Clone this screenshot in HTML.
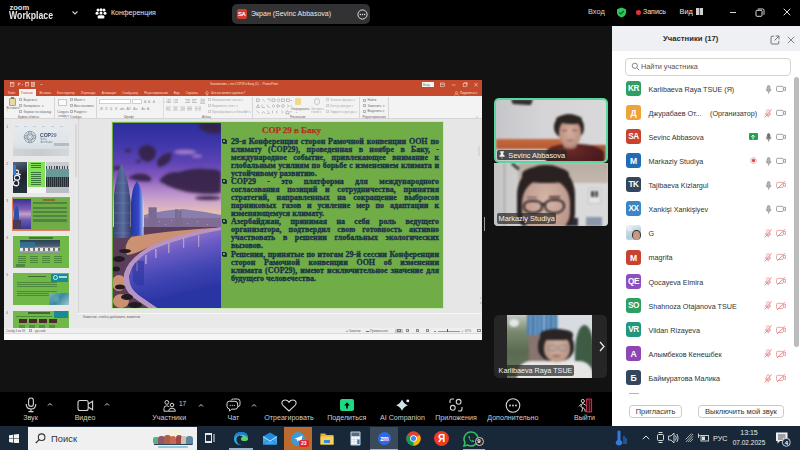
<!DOCTYPE html>
<html><head><meta charset="utf-8">
<style>
*{margin:0;padding:0;box-sizing:border-box}
html,body{width:800px;height:450px;overflow:hidden;background:#121212;font-family:"Liberation Sans",sans-serif}
.a{position:absolute}
#top{left:0;top:0;width:800px;height:26px;background:#000}
#main{left:0;top:26px;width:612px;height:366px;background:#121212}
#tool{left:0;top:392px;width:612px;height:35px;background:#000}
#panel{left:612px;top:26px;width:188px;height:401px;background:#fff}
#phead{left:0;top:0;width:188px;height:25px;background:#eef0f4}
#task{left:0;top:426px;width:800px;height:24px;background:#182838}
/* ppt */
#ppt{left:4px;top:80px;width:478px;height:260px;background:#e6e6e6;overflow:hidden}
#ttl{left:0;top:0;width:478px;height:16px;background:#c5492c}
#rib{left:0;top:16px;width:478px;height:23px;background:#f3f3f3;border-bottom:1px solid #d6d6d6}
#thumbs{left:0;top:39px;width:74px;height:210px;background:#e8e8e8}
#slide{left:107px;top:41px;width:333px;height:188px;background:#70ad47;border:1px solid #c8ecb0}
#notes{left:74px;top:232.5px;width:404px;height:15.5px;background:#e9e9e9;border-top:1px solid #f6f6f6}
#status{left:0;top:248px;width:478px;height:6px;background:#efefef;border-bottom:0.5px solid #dadada}
#sbot{left:0;top:254px;width:478px;height:6px;background:#f6f6f6}
.tile{background:#222}
</style></head><body>
<svg width="0" height="0" style="position:absolute"><defs>
<linearGradient id="sky" x1="0" y1="0" x2="0" y2="185" gradientUnits="userSpaceOnUse">
 <stop offset="0" stop-color="#2c2e9c"/>
 <stop offset="0.108" stop-color="#3e36aa"/>
 <stop offset="0.216" stop-color="#5e44b4"/>
 <stop offset="0.297" stop-color="#8a5cc0"/>
 <stop offset="0.357" stop-color="#b084c8"/>
 <stop offset="0.41" stop-color="#c8a0cc"/>
 <stop offset="0.449" stop-color="#d8b0c4"/>
 <stop offset="0.486" stop-color="#e6c0b2"/>
</linearGradient>
<linearGradient id="water" x1="0" y1="105" x2="20" y2="185" gradientUnits="userSpaceOnUse">
 <stop offset="0" stop-color="#cca0d2"/>
 <stop offset="0.22" stop-color="#a080cc"/>
 <stop offset="0.45" stop-color="#6c5cc4"/>
 <stop offset="0.72" stop-color="#4246b4"/>
 <stop offset="1" stop-color="#2a34a4"/>
</linearGradient>
<linearGradient id="tw1" x1="0" y1="0" x2="1" y2="0">
 <stop offset="0" stop-color="#3a4676"/>
 <stop offset="0.55" stop-color="#5a6e9e"/>
 <stop offset="1" stop-color="#34406e"/>
</linearGradient>
<linearGradient id="tw2" x1="0" y1="0" x2="1" y2="0">
 <stop offset="0" stop-color="#2434a0"/>
 <stop offset="0.6" stop-color="#3448c8"/>
 <stop offset="0.85" stop-color="#7a90e0"/>
 <stop offset="1" stop-color="#c8d4f4"/>
</linearGradient>
<filter id="bl" x="-5%" y="-5%" width="110%" height="110%"><feGaussianBlur stdDeviation="0.45"/></filter><filter id="bl3" x="-20%" y="-20%" width="140%" height="140%"><feGaussianBlur stdDeviation="1.6"/></filter>
<g id="city">
 <rect x="0" y="0" width="108" height="185" fill="url(#sky)"/>
 <g filter="url(#bl)">
 <g fill="#36224a" opacity="0.95" filter="url(#bl3)">
  <path d="M86 0 H108 V10 Q98 12 90 8 Q84 4 86 0 Z"/>
  <path d="M25 28 Q28 21 36 22 Q44 24 43 32 Q40 39 33 39 Q26 36 25 28 Z"/>
  <path d="M44 38 Q50 29 58 30 Q60 35 55 40 Q50 44 45 44 Z"/>
  <ellipse cx="15" cy="27.5" rx="3.5" ry="1.6"/>
  <ellipse cx="25.5" cy="38.5" rx="2.5" ry="1.4"/>
  <path d="M46 58 Q52 48 66 49 Q80 44 96 46 Q108 46 108 50 V70 Q96 72 82 70 Q62 68 46 58 Z"/>
  <path d="M15 55 Q22 49 32 51 Q40 54 38 58 Q28 60 15 55 Z"/>
  <ellipse cx="95" cy="75" rx="13" ry="2"/>
  <ellipse cx="4" cy="45" rx="4" ry="2"/>
 </g>
 <g fill="#c494d0" opacity="0.7" filter="url(#bl3)">
  <ellipse cx="72" cy="29" rx="11" ry="2.6"/>
  <ellipse cx="84" cy="33" rx="5" ry="1.6"/>
 </g>
 <path d="M31 92 Q50 87 70 86 Q88 88 108 92 V114 H31 Z" fill="#8a7eae"/>
 <g fill="#7a6a92">
  <rect x="35.5" y="84.3" width="8.2" height="28"/>
  <rect x="62" y="86.4" width="3" height="26"/>
  <rect x="65.5" y="87.5" width="3" height="25"/>
 </g>
 <path d="M31 95 H108 V112 H31 Z" fill="#7c6a90" opacity="0.85"/>
 <g fill="#e8c0a0" opacity="0.5">
  <rect x="46" y="98" width="1" height="1"/><rect x="52" y="101" width="1" height="1"/><rect x="58" y="97" width="1" height="1"/><rect x="74" y="100" width="1" height="1"/><rect x="84" y="98" width="1" height="1"/><rect x="94" y="101" width="1" height="1"/>
 </g>
 <path d="M0 104 H108 V105 Q62 112 36 124 Q16 136 12 150 Q10 166 20 174 Q30 181 36 185 H0 Z" fill="#5a3c58"/>
 <g fill="#e0a078" opacity="0.85">
  <path d="M18 114 Q50 108 100 105 L108 105 Q62 112 36 124 Q20 132 14 132 Q10 122 18 114 Z"/>
  <ellipse cx="6" cy="160" rx="7" ry="8"/>
  <ellipse cx="8" cy="178" rx="8" ry="7"/>
 </g>
 <path d="M108 107 Q64 115 38 127 Q19 138 16 152 Q15 165 25 172 Q35 179 44 185 H108 Z" fill="url(#water)"/>
 <g fill="#f4d4c4" opacity="0.5">
  <rect x="23" y="139" width="2" height="9"/>
  <rect x="32" y="132" width="1.8" height="9"/>
  <rect x="42" y="126" width="1.6" height="9"/>
  <rect x="55" y="120" width="1.4" height="10"/>
  <rect x="70" y="115" width="1.2" height="10"/>
  <rect x="85" y="112" width="1.2" height="12"/>
 </g>
 <path d="M19 143 Q24 136 31 138 V162 Q24 164 20 158 Z" fill="#26329a" opacity="0.55"/>
 <path d="M108 104 Q62 111 36 124 Q15 136 11 151 Q9 166 20 174 Q30 181 36 185 L44 185 Q35 179 25 172 Q15 165 16 152 Q19 138 38 127 Q64 115 108 107 Z" fill="#b894c4"/>
 <g fill="#241e24">
  <ellipse cx="6" cy="136" rx="6" ry="3"/>
  <ellipse cx="3" cy="146" rx="4" ry="2.5"/>
  <ellipse cx="7" cy="164" rx="5" ry="2.5"/>
  <ellipse cx="14" cy="174" rx="6" ry="3"/>
  <ellipse cx="22" cy="182" rx="7" ry="3"/>
  <ellipse cx="12" cy="128" rx="6" ry="2"/>
 </g>
 <path d="M1 115 V72 Q3 52 8.6 40 Q15 54 17.6 78 V115 Z" fill="url(#tw1)"/>
 <path d="M18 112 V80 Q19 64 24 58 Q30 66 30.6 82 V112 Z" fill="url(#tw2)"/>
 <g stroke="#9aaed8" stroke-width="0.45" opacity="0.45">
  <path d="M3 60 H14 M2 70 H16 M1 80 H17 M1 90 H17 M1 100 H17 M1 110 H17"/>
 </g>
 </g>
</g>
</defs></svg>

<div id="top" class="a">
  <div class="a" style="left:9.4px;top:3.2px;font-size:7.6px;font-weight:700;color:#e0e0e0;line-height:9px">zoom</div>
  <div class="a" style="left:9.4px;top:10px;font-size:10.4px;font-weight:700;color:#e6e6e6;line-height:12px;transform:scaleX(0.84);transform-origin:0 0">Workplace</div>
  <svg class="a" style="left:71px;top:10px" width="8" height="6" viewBox="0 0 8 6"><path d="M1.5 1.5 L4 4 L6.5 1.5" stroke="#cfcfcf" stroke-width="1.1" fill="none"/></svg>
  <svg class="a" style="left:95px;top:8px" width="12" height="11" viewBox="0 0 12 11"><g fill="#fff"><circle cx="3" cy="2" r="1.5"/><circle cx="6" cy="1.7" r="1.5"/><circle cx="9" cy="2" r="1.5"/><circle cx="2" cy="5.3" r="1.5"/><circle cx="6" cy="5" r="1.5"/><circle cx="10" cy="5.3" r="1.5"/><rect x="2.5" y="7.2" width="7" height="3.4" rx="1.6"/></g></svg>
  <div class="a" style="left:111px;top:8px;font-size:7px;color:#e6e6e6;line-height:10px">Конференция</div>
  <div class="a" style="left:232px;top:4px;width:138px;height:19.5px;background:#323234;border-radius:5px"></div>
  <div class="a" style="left:236.5px;top:9px;width:10.5px;height:10px;background:#d53b2c;border-radius:2px;color:#fff;font-size:6px;font-weight:700;text-align:center;line-height:10px;letter-spacing:-0.3px">SA</div>
  <div class="a" style="left:251px;top:9px;font-size:7px;color:#e8e8e8;line-height:10px">Экран (Sevinc Abbasova)</div>
  <svg class="a" style="left:356.5px;top:8.5px" width="11" height="11" viewBox="0 0 11 11"><circle cx="5.5" cy="5.5" r="4.6" stroke="#e0e0e0" stroke-width="1" fill="none"/><g fill="#e0e0e0"><circle cx="3.4" cy="5.5" r="0.7"/><circle cx="5.5" cy="5.5" r="0.7"/><circle cx="7.6" cy="5.5" r="0.7"/></g></svg>
  <div class="a" style="left:588px;top:7px;font-size:7.4px;color:#d8d8d8;line-height:10px">Вход</div>
  <svg class="a" style="left:615.5px;top:7px" width="11" height="11" viewBox="0 0 11 11"><path d="M5.5 0.6 L10 2.2 L10 5.2 C10 8 7.8 9.8 5.5 10.6 C3.2 9.8 1 8 1 5.2 L1 2.2 Z" fill="#2ec55a"/><path d="M3.3 5.5 L4.9 7 L7.8 4" stroke="#062" stroke-width="1.2" fill="none"/></svg>
  <div class="a" style="left:636px;top:10.3px;width:4.6px;height:4.6px;border-radius:50%;background:#e0303a"></div>
  <div class="a" style="left:643px;top:7px;font-size:7px;color:#e8e8e8;line-height:10px">Запись</div>
  <div class="a" style="left:679.5px;top:7px;font-size:7.4px;color:#e8e8e8;line-height:10px">Вид</div>
  <div class="a" style="left:696px;top:8.3px;width:7px;height:6.8px;background:#d0d0d0"></div>
  <div class="a" style="left:699.2px;top:8.3px;width:0.8px;height:6.8px;background:#555"></div>
  <div class="a" style="left:729.5px;top:11.5px;width:6.5px;height:1px;background:#d8d8d8"></div>
  <svg class="a" style="left:755px;top:8px" width="10" height="9" viewBox="0 0 10 9"><rect x="1" y="2.3" width="6" height="6" rx="1" stroke="#d8d8d8" stroke-width="1" fill="none"/><path d="M2.7 1 H7.8 Q9 1 9 2.2 V6.8" stroke="#d8d8d8" stroke-width="1" fill="none"/></svg>
  <svg class="a" style="left:783px;top:8px" width="8" height="8" viewBox="0 0 8 8"><path d="M0.7 0.7 L7.3 7.3 M7.3 0.7 L0.7 7.3" stroke="#e0e0e0" stroke-width="1"/></svg>
</div>
<div id="main" class="a"></div>
<div id="tool" class="a"></div>
<div class="a" style="left:-9.5px;top:413.5px;width:80px;text-align:center;font-size:7.1px;color:#cfcfcf;line-height:9px;white-space:nowrap">Звук</div>
<div class="a" style="left:45px;top:413.5px;width:80px;text-align:center;font-size:7.1px;color:#cfcfcf;line-height:9px;white-space:nowrap">Видео</div>
<div class="a" style="left:129.2px;top:413.5px;width:80px;text-align:center;font-size:7.1px;color:#cfcfcf;line-height:9px;white-space:nowrap">Участники</div>
<div class="a" style="left:193.4px;top:413.5px;width:80px;text-align:center;font-size:7.1px;color:#cfcfcf;line-height:9px;white-space:nowrap">Чат</div>
<div class="a" style="left:249px;top:413.5px;width:80px;text-align:center;font-size:7.1px;color:#cfcfcf;line-height:9px;white-space:nowrap">Отреагировать</div>
<div class="a" style="left:306.8px;top:413.5px;width:80px;text-align:center;font-size:7.1px;color:#cfcfcf;line-height:9px;white-space:nowrap">Поделиться</div>
<div class="a" style="left:362.5px;top:413.5px;width:80px;text-align:center;font-size:7.1px;color:#cfcfcf;line-height:9px;white-space:nowrap">AI Companion</div>
<div class="a" style="left:416px;top:413.5px;width:80px;text-align:center;font-size:7.1px;color:#cfcfcf;line-height:9px;white-space:nowrap">Приложения</div>
<div class="a" style="left:472.79999999999995px;top:413.5px;width:80px;text-align:center;font-size:7.1px;color:#cfcfcf;line-height:9px;white-space:nowrap">Дополнительно</div>
<div class="a" style="left:544.5px;top:413.5px;width:80px;text-align:center;font-size:7.1px;color:#cfcfcf;line-height:9px;white-space:nowrap">Выйти</div>
<svg class="a" style="left:25px;top:397px" width="12" height="16" viewBox="0 0 12 16"><rect x="3.6" y="1" width="4.8" height="8.4" rx="2.4" fill="none" stroke="#d6d6d6" stroke-width="1.1"/><path d="M1.2 7 Q1.2 12 6 12 Q10.8 12 10.8 7 M6 12 V14.6 M3.5 14.6 H8.5" fill="none" stroke="#d6d6d6" stroke-width="1.1"/></svg>
<svg class="a" style="left:47px;top:402px" width="6" height="5" viewBox="0 0 6 5"><path d="M1 3.5 L3 1.5 L5 3.5" fill="none" stroke="#d6d6d6" stroke-width="1"/></svg>
<svg class="a" style="left:77px;top:399px" width="17" height="13" viewBox="0 0 17 13"><rect x="1" y="1.5" width="10.2" height="10" rx="2" fill="none" stroke="#d6d6d6" stroke-width="1.1"/><path d="M11.2 5 L15.6 2.2 V10.8 L11.2 8" fill="none" stroke="#d6d6d6" stroke-width="1.1"/></svg>
<svg class="a" style="left:104px;top:402px" width="6" height="5" viewBox="0 0 6 5"><path d="M1 3.5 L3 1.5 L5 3.5" fill="none" stroke="#d6d6d6" stroke-width="1"/></svg>
<svg class="a" style="left:162.5px;top:399.5px" width="13" height="12" viewBox="0 0 13 12"><circle cx="3.8" cy="2.4" r="1.9" fill="none" stroke="#d6d6d6" stroke-width="1"/><path d="M1 11.2 V8.4 Q1 5.8 3.8 5.8 Q5.6 5.8 6.3 7.2" fill="none" stroke="#d6d6d6" stroke-width="1"/><circle cx="9" cy="5" r="1.8" fill="none" stroke="#d6d6d6" stroke-width="1"/><path d="M5.6 11.2 Q5.6 8.2 9 8.2 Q12.4 8.2 12.4 11.2 Z M1 11.2 H5.6" fill="none" stroke="#d6d6d6" stroke-width="1"/></svg>
<div class="a" style="left:179px;top:399.5px;font-size:6.5px;color:#d0d0d0;line-height:8px">17</div>
<svg class="a" style="left:197.5px;top:402.5px" width="6" height="5" viewBox="0 0 6 5"><path d="M1 3.5 L3 1.5 L5 3.5" fill="none" stroke="#d6d6d6" stroke-width="1"/></svg>
<svg class="a" style="left:226px;top:398px" width="15" height="14" viewBox="0 0 15 14"><path d="M5 2.5 Q5.5 1 7.5 1 H11.5 Q14 1 14 3.5 V6.5 Q14 8.5 12 8.8" fill="none" stroke="#d6d6d6" stroke-width="1"/><path d="M3.3 3.3 H9 Q11.7 3.3 11.7 6 V8.6 Q11.7 11.2 9 11.2 H5.5 L3.5 13.2 V11 Q1 10.6 1 8.4 V5.7 Q1 3.3 3.3 3.3 Z" fill="none" stroke="#d6d6d6" stroke-width="1"/><g fill="#d6d6d6"><circle cx="4.3" cy="7.3" r="0.6"/><circle cx="6.3" cy="7.3" r="0.6"/><circle cx="8.3" cy="7.3" r="0.6"/></g></svg>
<svg class="a" style="left:250.5px;top:402.5px" width="6" height="5" viewBox="0 0 6 5"><path d="M1 3.5 L3 1.5 L5 3.5" fill="none" stroke="#d6d6d6" stroke-width="1"/></svg>
<svg class="a" style="left:281px;top:399px" width="16" height="13" viewBox="0 0 16 13"><path d="M8 12 L2.2 6.6 Q0.6 5 1 3.2 Q1.6 1 4.2 1 Q6.6 1 8 3.2 Q9.4 1 11.8 1 Q14.4 1 15 3.2 Q15.4 5 13.8 6.6 Z" fill="none" stroke="#d6d6d6" stroke-width="1.1"/></svg>
<div class="a" style="left:339.7px;top:398.8px;width:14px;height:12px;background:#1fd882;border-radius:2px"></div>
<svg class="a" style="left:342.5px;top:400.5px" width="8" height="8" viewBox="0 0 8 8"><path d="M4 7.5 V2.5" stroke="#000" stroke-width="1.6"/><path d="M1.2 4.4 L4 1.2 L6.8 4.4 Z" fill="#000"/></svg>
<svg class="a" style="left:395.5px;top:398.5px" width="14" height="13" viewBox="0 0 14 13"><path d="M6 0.6 Q7.6 4.6 11.8 6.2 Q7.6 7.8 6 11.8 Q4.4 7.8 0.2 6.2 Q4.4 4.6 6 0.6 Z" fill="#cde4ec"/><circle cx="11.8" cy="1.9" r="1.4" fill="#e8f2f4"/></svg>
<svg class="a" style="left:448.5px;top:398px" width="14" height="14" viewBox="0 0 14 14"><circle cx="9.6" cy="3.8" r="2.4" fill="none" stroke="#d6d6d6" stroke-width="1.1"/><circle cx="3.8" cy="9.8" r="2.4" fill="none" stroke="#d6d6d6" stroke-width="1.1"/><path d="M1 5 V3 Q1 1 3 1 H5 M9 13 H11 Q13 13 13 11 V9" fill="none" stroke="#d6d6d6" stroke-width="1.1"/></svg>
<svg class="a" style="left:504.5px;top:397.8px" width="16" height="15" viewBox="0 0 16 15"><circle cx="8" cy="7.5" r="6.8" fill="none" stroke="#d6d6d6" stroke-width="1.1"/><g fill="#d6d6d6"><circle cx="5" cy="7.5" r="0.9"/><circle cx="8" cy="7.5" r="0.9"/><circle cx="11" cy="7.5" r="0.9"/></g></svg>
<svg class="a" style="left:577px;top:397.5px" width="16" height="15" viewBox="0 0 16 15"><path d="M9.6 1 H14.6 V14 H9.6 Z" fill="#3a0812" stroke="#e23a55" stroke-width="0.9"/><path d="M9.6 1 L12.6 2.6 V14.5" fill="none" stroke="#c02040" stroke-width="0.8"/><circle cx="5.8" cy="3" r="1.6" fill="none" stroke="#e6e6e6" stroke-width="0.9"/><path d="M5.6 5 L3.8 8.6 L5.8 9.6 L4.8 13.8 M5.8 9.6 L7.6 11 L8.4 13.8 M4.2 6 L2 8.4 M6.2 5.6 L8.8 7.4" fill="none" stroke="#e6e6e6" stroke-width="0.9"/></svg>

<div id="panel" class="a">
  <div id="phead" class="a"></div>
  <div class="a" style="left:51px;top:8px;font-size:7.7px;font-weight:700;color:#2b2b2b;line-height:10px">Участники (17)</div>
  <svg class="a" style="left:158px;top:8.5px" width="10" height="10" viewBox="0 0 10 10"><path d="M4 1.2 H2 Q1 1.2 1 2.2 V8 Q1 9 2 9 H7.8 Q8.8 9 8.8 8 V6" fill="none" stroke="#666" stroke-width="0.9"/><path d="M5.6 1 H9 V4.4 M9 1 L4.6 5.4" fill="none" stroke="#666" stroke-width="0.9"/></svg>
  <svg class="a" style="left:174.5px;top:9.5px" width="8" height="8" viewBox="0 0 8 8"><path d="M0.8 0.8 L7.2 7.2 M7.2 0.8 L0.8 7.2" stroke="#777" stroke-width="0.9"/></svg>
  <div class="a" style="left:12.5px;top:31.5px;width:166px;height:18px;border:1px solid #d4d4d4;border-radius:4px;background:#fff"></div>
  <svg class="a" style="left:18.5px;top:36px" width="9" height="9" viewBox="0 0 9 9"><circle cx="3.8" cy="3.8" r="2.6" fill="none" stroke="#777" stroke-width="0.9"/><path d="M6 6 L8.3 8.3" stroke="#777" stroke-width="0.9"/></svg>
  <div class="a" style="left:29px;top:35.5px;font-size:7.3px;color:#555;line-height:10px">Найти участника</div>
  <div class="a" style="left:182px;top:51px;width:5px;height:270px;border-radius:2.5px;background:#bcbcbc"></div>
<svg width="0" height="0" style="position:absolute"><defs>
<g id="mic"><rect x="2.3" y="0.6" width="2.6" height="5.2" rx="1.3" fill="#b4b4b4" stroke="#8c8c8c" stroke-width="0.7"/><path d="M1.2 3.8 Q1.2 6.7 3.6 6.7 Q6 6.7 6 3.8 M3.6 6.7 V8.7" fill="none" stroke="#8c8c8c" stroke-width="0.8"/></g>
<g id="mic2"><rect x="2.3" y="0.6" width="2.6" height="5.2" rx="1.3" fill="#707070" stroke="#6a6a6a" stroke-width="0.7"/><path d="M1.2 3.8 Q1.2 6.7 3.6 6.7 Q6 6.7 6 3.8 M3.6 6.7 V8.7" fill="none" stroke="#7a7a7a" stroke-width="0.8"/></g>
<g id="micx"><rect x="2.8" y="0.8" width="2.6" height="5.2" rx="1.3" fill="none" stroke="#e88a8a" stroke-width="0.75"/><path d="M1.6 4 Q1.6 6.9 4.1 6.9 Q6.6 6.9 6.6 4 M4.1 6.9 V8.7" fill="none" stroke="#e88a8a" stroke-width="0.75"/><path d="M0.6 8.6 L7.6 0.4" stroke="#e47878" stroke-width="0.85"/></g>
<g id="cam"><rect x="0.5" y="1.3" width="6.8" height="5.2" rx="1.1" fill="none" stroke="#8c8c8c" stroke-width="0.8"/><path d="M7.3 3.2 L9.5 2.1 V5.7 L7.3 4.6" fill="none" stroke="#8c8c8c" stroke-width="0.8"/></g>
<g id="camx"><rect x="0.5" y="1.3" width="6.8" height="5.2" rx="1.1" fill="none" stroke="#e88a8a" stroke-width="0.75"/><path d="M7.3 3.2 L9.5 2.1 V5.7 L7.3 4.6" fill="none" stroke="#e88a8a" stroke-width="0.75"/><path d="M1.2 7.8 L9 0.3" stroke="#e47878" stroke-width="0.85"/></g>
</defs></svg>
<div class="a" style="left:14px;top:55.00px;width:15px;height:15px;border-radius:3px;background:#2e9e63;color:#fff;font-size:8.2px;font-weight:700;text-align:center;line-height:16.8px;letter-spacing:-0.5px">KR</div>
<div class="a" style="left:36.5px;top:58.90px;font-size:7.2px;color:#333;line-height:9px;white-space:nowrap">Karlibaeva Raya TSUE (Я)</div>
<svg class="a" style="left:152.5px;top:58.60px" width="8" height="9" viewBox="0 0 8 9"><use href="#mic"/></svg>
<svg class="a" style="left:164px;top:58.80px" width="10" height="8" viewBox="0 0 10 8"><use href="#cam"/></svg>
<div class="a" style="left:14px;top:79.08px;width:15px;height:15px;border-radius:3px;background:#f0a23a;color:#fff;font-size:8.6px;font-weight:700;text-align:center;line-height:16.8px;letter-spacing:-0.3px">Д</div>
<div class="a" style="left:36.5px;top:82.98px;font-size:7.2px;color:#333;line-height:9px;white-space:nowrap">Джурабаев От...</div><div class="a" style="left:98px;top:82.98px;font-size:7.2px;color:#333;line-height:9px;white-space:nowrap">(Организатор)</div>
<svg class="a" style="left:151.5px;top:82.68px" width="8" height="9" viewBox="0 0 8 9"><use href="#micx"/></svg>
<svg class="a" style="left:164px;top:82.88px" width="10" height="8" viewBox="0 0 10 8"><use href="#cam"/></svg>
<div class="a" style="left:14px;top:103.16px;width:15px;height:15px;border-radius:3px;background:#c8432f;color:#fff;font-size:8.2px;font-weight:700;text-align:center;line-height:16.8px;letter-spacing:-0.5px">SA</div>
<div class="a" style="left:36.5px;top:107.06px;font-size:7.2px;color:#333;line-height:9px;white-space:nowrap">Sevinc Abbasova</div>
<svg class="a" style="left:152.5px;top:106.76px" width="8" height="9" viewBox="0 0 8 9"><use href="#mic2"/></svg>
<svg class="a" style="left:164px;top:106.96px" width="10" height="8" viewBox="0 0 10 8"><use href="#cam"/></svg>
<div class="a" style="left:136.5px;top:107.16px;width:9px;height:7px;background:#1ea34a;border-radius:1px"></div><svg class="a" style="left:138px;top:107.66px" width="6" height="6" viewBox="0 0 6 6"><path d="M3 5.5 V1.2 M1.3 2.8 L3 1 L4.7 2.8" stroke="#fff" stroke-width="0.9" fill="none"/></svg>
<div class="a" style="left:14px;top:127.24px;width:15px;height:15px;border-radius:3px;background:#1f6bb8;color:#fff;font-size:8.6px;font-weight:700;text-align:center;line-height:16.8px;letter-spacing:-0.3px">M</div>
<div class="a" style="left:36.5px;top:131.14px;font-size:7.2px;color:#333;line-height:9px;white-space:nowrap">Markaziy Studiya</div>
<svg class="a" style="left:152.5px;top:130.84px" width="8" height="9" viewBox="0 0 8 9"><use href="#mic"/></svg>
<svg class="a" style="left:164px;top:131.04px" width="10" height="8" viewBox="0 0 10 8"><use href="#cam"/></svg>
<div class="a" style="left:137.5px;top:130.94px;width:7.5px;height:7.5px;border-radius:50%;background:#f5dede;border:0.6px solid #eac6c6"></div><div class="a" style="left:139.9px;top:133.34px;width:2.7px;height:2.7px;border-radius:50%;background:#d84848"></div>
<div class="a" style="left:14px;top:151.32px;width:15px;height:15px;border-radius:3px;background:#34465e;color:#fff;font-size:8.2px;font-weight:700;text-align:center;line-height:16.8px;letter-spacing:-0.5px">TK</div>
<div class="a" style="left:36.5px;top:155.22px;font-size:7.2px;color:#333;line-height:9px;white-space:nowrap">Tajibaeva Kizlargul</div>
<svg class="a" style="left:152.5px;top:154.92px" width="8" height="9" viewBox="0 0 8 9"><use href="#mic"/></svg>
<svg class="a" style="left:164px;top:155.12px" width="10" height="8" viewBox="0 0 10 8"><use href="#camx"/></svg>
<div class="a" style="left:14px;top:175.40px;width:15px;height:15px;border-radius:3px;background:#3b86c6;color:#fff;font-size:8.2px;font-weight:700;text-align:center;line-height:16.8px;letter-spacing:-0.5px">XX</div>
<div class="a" style="left:36.5px;top:179.30px;font-size:7.2px;color:#333;line-height:9px;white-space:nowrap">Xankişi Xankişiyev</div>
<svg class="a" style="left:152.5px;top:179.00px" width="8" height="9" viewBox="0 0 8 9"><use href="#mic"/></svg>
<svg class="a" style="left:164px;top:179.20px" width="10" height="8" viewBox="0 0 10 8"><use href="#cam"/></svg>
<div class="a" style="left:14px;top:199.48px;width:15px;height:15px;border-radius:3px;background:linear-gradient(160deg,#f0f4f6 0%,#c4dae4 40%,#b0ccd8 70%,#d8e4e8 100%);overflow:hidden"><div class="a" style="left:6px;top:4.2px;width:8.5px;height:10px;border-radius:50%;background:#3a2a24"></div><div class="a" style="left:7px;top:5.8px;width:6.5px;height:8.5px;border-radius:50%;background:#c49a84"></div><div class="a" style="left:1px;top:1px;width:5px;height:5px;border-radius:50%;background:#e8f0f4;opacity:.7"></div></div>
<div class="a" style="left:36.5px;top:203.38px;font-size:7.2px;color:#333;line-height:9px;white-space:nowrap">G</div>
<svg class="a" style="left:151.5px;top:203.08px" width="8" height="9" viewBox="0 0 8 9"><use href="#micx"/></svg>
<svg class="a" style="left:164px;top:203.28px" width="10" height="8" viewBox="0 0 10 8"><use href="#camx"/></svg>
<div class="a" style="left:14px;top:223.56px;width:15px;height:15px;border-radius:3px;background:#c8432f;color:#fff;font-size:8.6px;font-weight:700;text-align:center;line-height:16.8px;letter-spacing:-0.3px">M</div>
<div class="a" style="left:36.5px;top:227.46px;font-size:7.2px;color:#333;line-height:9px;white-space:nowrap">magrifa</div>
<svg class="a" style="left:151.5px;top:227.16px" width="8" height="9" viewBox="0 0 8 9"><use href="#micx"/></svg>
<svg class="a" style="left:164px;top:227.36px" width="10" height="8" viewBox="0 0 10 8"><use href="#camx"/></svg>
<div class="a" style="left:14px;top:247.64px;width:15px;height:15px;border-radius:3px;background:#8d4fc0;color:#fff;font-size:8.2px;font-weight:700;text-align:center;line-height:16.8px;letter-spacing:-0.5px">QE</div>
<div class="a" style="left:36.5px;top:251.54px;font-size:7.2px;color:#333;line-height:9px;white-space:nowrap">Qocayeva Elmira</div>
<svg class="a" style="left:151.5px;top:251.24px" width="8" height="9" viewBox="0 0 8 9"><use href="#micx"/></svg>
<svg class="a" style="left:164px;top:251.44px" width="10" height="8" viewBox="0 0 10 8"><use href="#camx"/></svg>
<div class="a" style="left:14px;top:271.72px;width:15px;height:15px;border-radius:3px;background:#2e9e63;color:#fff;font-size:8.2px;font-weight:700;text-align:center;line-height:16.8px;letter-spacing:-0.5px">SO</div>
<div class="a" style="left:36.5px;top:275.62px;font-size:7.2px;color:#333;line-height:9px;white-space:nowrap">Shahnoza Otajanova TSUE</div>
<svg class="a" style="left:151.5px;top:275.32px" width="8" height="9" viewBox="0 0 8 9"><use href="#micx"/></svg>
<svg class="a" style="left:164px;top:275.52px" width="10" height="8" viewBox="0 0 10 8"><use href="#camx"/></svg>
<div class="a" style="left:14px;top:295.80px;width:15px;height:15px;border-radius:3px;background:#23977d;color:#fff;font-size:8.2px;font-weight:700;text-align:center;line-height:16.8px;letter-spacing:-0.5px">VR</div>
<div class="a" style="left:36.5px;top:299.70px;font-size:7.2px;color:#333;line-height:9px;white-space:nowrap">Vildan Rizayeva</div>
<svg class="a" style="left:151.5px;top:299.40px" width="8" height="9" viewBox="0 0 8 9"><use href="#micx"/></svg>
<svg class="a" style="left:164px;top:299.60px" width="10" height="8" viewBox="0 0 10 8"><use href="#camx"/></svg>
<div class="a" style="left:14px;top:319.88px;width:15px;height:15px;border-radius:3px;background:#8d46b4;color:#fff;font-size:8.6px;font-weight:700;text-align:center;line-height:16.8px;letter-spacing:-0.3px">A</div>
<div class="a" style="left:36.5px;top:323.78px;font-size:7.2px;color:#333;line-height:9px;white-space:nowrap">Алымбеков Кенешбек</div>
<svg class="a" style="left:151.5px;top:323.48px" width="8" height="9" viewBox="0 0 8 9"><use href="#micx"/></svg>
<svg class="a" style="left:164px;top:323.68px" width="10" height="8" viewBox="0 0 10 8"><use href="#camx"/></svg>
<div class="a" style="left:14px;top:343.96px;width:15px;height:15px;border-radius:3px;background:#34465e;color:#fff;font-size:8.6px;font-weight:700;text-align:center;line-height:16.8px;letter-spacing:-0.3px">Б</div>
<div class="a" style="left:36.5px;top:347.86px;font-size:7.2px;color:#333;line-height:9px;white-space:nowrap">Баймуратова Малика</div>
<svg class="a" style="left:151.5px;top:347.56px" width="8" height="9" viewBox="0 0 8 9"><use href="#micx"/></svg>
<svg class="a" style="left:164px;top:347.76px" width="10" height="8" viewBox="0 0 10 8"><use href="#camx"/></svg>
  <div class="a" style="left:16.5px;top:367px;width:10.5px;height:1px;background:#e8a090"></div>
  <div class="a" style="left:0;top:368px;width:188px;height:33px;background:#fff"></div>
  <div class="a" style="left:17px;top:378.6px;width:53px;height:13px;border:1px solid #c9c9c9;border-radius:3.5px;font-size:7.4px;color:#333;text-align:center;line-height:11px">Пригласить</div>
  <div class="a" style="left:86px;top:378.6px;width:85.7px;height:13px;border:1px solid #c9c9c9;border-radius:3.5px;font-size:7.6px;color:#333;text-align:center;line-height:11px">Выключить мой звук</div>
</div>
<div id="task" class="a">
  <svg class="a" style="left:9.4px;top:7.6px" width="10" height="9.4" viewBox="0 0 10 9.4"><g fill="#f4f4f4"><path d="M0 1.3 L4.2 0.7 V4.4 H0 Z"/><path d="M4.9 0.6 L10 0 V4.4 H4.9 Z"/><path d="M0 5.1 H4.2 V8.7 L0 8.1 Z"/><path d="M4.9 5.1 H10 V9.4 L4.9 8.8 Z"/></g></svg>
  <div class="a" style="left:28px;top:0.5px;width:169px;height:23.5px;background:#f0f0f0"></div>
  <svg class="a" style="left:35px;top:7px" width="11" height="11" viewBox="0 0 11 11"><circle cx="6.6" cy="4.2" r="3.3" fill="none" stroke="#333" stroke-width="1.1"/><path d="M4.2 6.6 L0.8 10" stroke="#333" stroke-width="1.2"/></svg>
  <div class="a" style="left:51px;top:6.5px;font-size:9.4px;color:#333;line-height:11px">Поиск</div>
  <div class="a" style="left:152px;top:2.5px;width:42px;height:19.5px;overflow:hidden">
    <div class="a" style="left:12px;top:0;width:18px;height:6px;border-radius:50%;background:#f6efd0;opacity:.7"></div>
    <div class="a" style="left:1px;top:8px;width:6px;height:7px;background:#58b07a;border-radius:2px"></div>
    <div class="a" style="left:6px;top:7px;width:7px;height:9px;background:#8a5a6a;border-radius:3px 3px 0 0"></div>
    <div class="a" style="left:12px;top:6px;width:7px;height:10px;background:#b06048;border-radius:3px 3px 0 0"></div>
    <div class="a" style="left:18px;top:7px;width:6px;height:9px;background:#c46a50;border-radius:3px 3px 0 0"></div>
    <div class="a" style="left:24px;top:6px;width:6px;height:10px;background:#a04a40;border-radius:3px 3px 0 0"></div>
    <div class="a" style="left:29px;top:7px;width:6px;height:9px;background:#d0c0b8;border-radius:3px 3px 0 0"></div>
    <div class="a" style="left:34px;top:7px;width:7px;height:9px;background:#5a8aa0;border-radius:3px 3px 0 0"></div>
    <div class="a" style="left:2px;top:15px;width:38px;height:1.5px;background:#3a3a5a"></div>
    <div class="a" style="left:6px;top:17px;width:30px;height:2px;background:#88cfd8;border-radius:1px"></div>
  </div>
  <svg class="a" style="left:205px;top:7px" width="11" height="10" viewBox="0 0 11 10"><rect x="0.5" y="1.5" width="6" height="7" fill="none" stroke="#e8e8e8" stroke-width="1"/><path d="M0 0.5 H7 M0 9.5 H7 M9 1 V9" stroke="#e8e8e8" stroke-width="1"/></svg>
  <svg class="a" style="left:233px;top:5px" width="16" height="15" viewBox="0 0 16 15"><path d="M1 8 Q1 1 8 1 Q15 1 15 7 Q15 10 12 10 Q8 10 8 8 Q8 6 10 6 Q9 4 6.5 4.5 Q3 5.5 3.5 9.5 Q4.5 13.5 9 14 Q4 14.5 2 11.5 Q1 10 1 8 Z" fill="#2fa8e0"/><path d="M15 7 Q15 10 12 10 Q8 10 8 8 Q8 6 10 6 Q9 4 6.5 4.5 Q11 2 15 7 Z" fill="#5fd06a"/><path d="M8 1 Q15 1 15 7 Q12 3 7 3.5 Q3 4 1.5 6.5 Q3 1 8 1 Z" fill="#1a7fd0"/></svg>
  <div class="a" style="left:229px;top:22px;width:24px;height:1.5px;background:#9ab4d0"></div>
  <svg class="a" style="left:262px;top:6px" width="16" height="13" viewBox="0 0 16 13"><path d="M1 4.5 L8 0.5 L15 4.5 V12.5 H1 Z" fill="#1f8ce0"/><path d="M1 4.5 L8 9 L15 4.5 V12.5 H1 Z" fill="#3aa8f0"/><path d="M1 12.5 L6.5 7.8 M15 12.5 L9.5 7.8" stroke="#1a6ab8" stroke-width="0.6"/><path d="M1 4.5 L8 9 L15 4.5" fill="none" stroke="#e8f4ff" stroke-width="0.8"/></svg>
  <div class="a" style="left:284px;top:0.5px;width:28px;height:23.5px;background:#bd6a2e"></div>
  <div class="a" style="left:291px;top:5.5px;width:14px;height:14px;border-radius:50%;background:#3e9ad6"></div>
  <svg class="a" style="left:293.5px;top:8.5px" width="9" height="8" viewBox="0 0 9 8"><path d="M0.5 3.8 L8.5 0.5 L7 7.5 L4.3 5.3 L3 6.8 L3.2 4.6 Z" fill="#fff"/></svg>
  <div class="a" style="left:299px;top:13.5px;width:9.5px;height:7px;background:#e02828;border-radius:2px;color:#fff;font-size:5px;font-weight:700;line-height:7px;text-align:center">23</div>
  <svg class="a" style="left:320px;top:6px" width="14" height="13" viewBox="0 0 14 13"><path d="M0.5 1.5 H5 L6.5 3 H13.5 V12.5 H0.5 Z" fill="#e8b030"/><path d="M0.5 4.5 H13.5 V12.5 H0.5 Z" fill="#f8d060"/><rect x="4" y="8" width="6" height="3" fill="#3a8ad0"/></svg>
  <svg class="a" style="left:350px;top:5px" width="11" height="15" viewBox="0 0 11 15"><rect x="0.5" y="0.5" width="10" height="14" rx="1" fill="#c8d4e0"/><rect x="1.5" y="1.5" width="8" height="3.5" fill="#5a6a80"/><g fill="#fff"><rect x="1.5" y="6" width="2.2" height="1.8"/><rect x="4.4" y="6" width="2.2" height="1.8"/><rect x="7.3" y="6" width="2.2" height="1.8"/><rect x="1.5" y="8.6" width="2.2" height="1.8"/><rect x="4.4" y="8.6" width="2.2" height="1.8"/><rect x="1.5" y="11.2" width="2.2" height="1.8"/><rect x="4.4" y="11.2" width="2.2" height="1.8"/></g><rect x="7.3" y="8.6" width="2.2" height="4.4" fill="#3a7ac0"/></svg>
  <div class="a" style="left:370px;top:0.5px;width:28px;height:23.5px;background:#3b4a5a"></div>
  <div class="a" style="left:377.5px;top:5.5px;width:13.5px;height:13.5px;border-radius:50%;background:#2d6ae8;color:#fff;font-size:6.5px;font-weight:700;text-align:center;line-height:13.5px;letter-spacing:-0.4px">zm</div>
  <div class="a" style="left:370px;top:22.5px;width:28px;height:1.5px;background:#9ab4d0"></div>
  <svg class="a" style="left:405.5px;top:5px" width="15" height="15" viewBox="0 0 15 15"><circle cx="7.5" cy="7.5" r="7.2" fill="#db4437"/><path d="M7.5 7.5 L1.3 3.9 A7.2 7.2 0 0 0 7.5 14.7 Z" fill="#0f9d58"/><path d="M7.5 7.5 L7.5 14.7 A7.2 7.2 0 0 0 13.7 3.9 Z" fill="#f4b400"/><circle cx="7.5" cy="7.5" r="3.3" fill="#fff"/><circle cx="7.5" cy="7.5" r="2.5" fill="#4285f4"/></svg>
  <div class="a" style="left:434px;top:5px;width:15px;height:15px;border-radius:50%;background:#f03a24;color:#fff;font-size:10px;font-weight:700;text-align:center;line-height:15px">Я</div>
  <svg class="a" style="left:463px;top:4.5px" width="16" height="16" viewBox="0 0 16 16"><path d="M8 1 A7 7 0 1 1 4.5 14 L1 15 L2 11.5 A7 7 0 0 1 8 1 Z" fill="none" stroke="#30c060" stroke-width="1.6"/><path d="M5.5 5 Q5 7 7 9.5 Q9 11.5 11 11 L11 9.8 L9.5 9 L8.8 9.8 Q7.2 9 6.5 7.5 L7.2 6.8 L6.5 5 Z" fill="#30c060"/></svg>
  <div class="a" style="left:474.5px;top:11px;width:9px;height:9px;border-radius:50%;background:#1e2b38;border:1px solid #ccc;color:#fff;font-size:6px;font-weight:700;text-align:center;line-height:7px">9</div>
  <div class="a" style="left:463px;top:22.5px;width:22px;height:1.5px;background:#9ab4d0"></div>
  <svg class="a" style="left:614.5px;top:4px" width="12" height="16" viewBox="0 0 12 16"><path d="M2.5 1.8 Q2.5 0.5 4 0.5 Q5.5 0.5 5.5 1.8 V10 Q7.3 11 7.3 12.6 Q7.3 15.4 4 15.4 Q0.7 15.4 0.7 12.6 Q0.7 11 2.5 10 Z" fill="#2f7de0"/><path d="M9 6 V14 M11 8 V14" stroke="#2f7de0" stroke-width="1"/></svg>
  <svg class="a" style="left:642px;top:9px" width="8" height="5" viewBox="0 0 8 5"><path d="M0.8 4.2 L4 1 L7.2 4.2" fill="none" stroke="#e0e0e0" stroke-width="1"/></svg>
  <svg class="a" style="left:656.5px;top:6px" width="7" height="12" viewBox="0 0 7 12"><rect x="0.5" y="2.5" width="6" height="6" rx="1" fill="none" stroke="#ddd" stroke-width="1"/><path d="M1.5 0.5 H5.5 M1.5 10.5 H5.5" stroke="#ddd" stroke-width="1"/></svg>
  <svg class="a" style="left:668px;top:6px" width="11" height="12" viewBox="0 0 11 12"><path d="M0.5 4 H3 L6 1 V11 L3 8 H0.5 Z" fill="none" stroke="#ddd" stroke-width="0.9"/><path d="M7.5 3.5 Q9 6 7.5 8.5 M9 2 Q11.3 6 9 10" fill="none" stroke="#ddd" stroke-width="0.9"/></svg>
  <svg class="a" style="left:685px;top:7px" width="9" height="10" viewBox="0 0 9 10"><path d="M1 9 L8 1 M3 9 L8 3.5 M5 9 L8 6 M0.5 6.5 L6.5 0.5" stroke="#ccc" stroke-width="0.8"/></svg>
  <svg class="a" style="left:697.5px;top:7px" width="11" height="10" viewBox="0 0 11 10"><rect x="3" y="2.5" width="7.5" height="5.5" fill="none" stroke="#ddd" stroke-width="0.9"/><rect x="4" y="3.5" width="3" height="3.5" fill="#ddd"/><path d="M0.5 0.5 V5 M0.5 2.5 H2.5" stroke="#ddd" stroke-width="0.9"/></svg>
  <div class="a" style="left:713px;top:7.5px;font-size:7.2px;color:#e8e8e8;line-height:9px">РУС</div>
  <div class="a" style="left:729px;top:2.2px;width:40px;text-align:center;font-size:7px;color:#eaeaea;line-height:9px">13:15</div>
  <div class="a" style="left:729px;top:11.8px;width:40px;text-align:center;font-size:6.5px;color:#eaeaea;line-height:9px">07.02.2025</div>
  <svg class="a" style="left:775px;top:4.5px" width="16" height="16" viewBox="0 0 16 16"><path d="M1 1.5 H12.5 V10 H5 L2.5 12.5 V10 H1 Z" fill="#f0f0f0"/><path d="M3 4 H10.5 M3 6 H10.5 M3 8 H8" stroke="#1b2a39" stroke-width="0.8"/><circle cx="11.3" cy="11.3" r="4" fill="#1b2a39" stroke="#e0e0e0" stroke-width="0.9"/><text x="11.3" y="13.6" font-size="6" font-family="Liberation Sans" font-weight="700" fill="#fff" text-anchor="middle">4</text></svg>
</div>

<div id="ppt" class="a">
<div id="ttl" class="a"></div>
<svg class="a" style="left:5.5px;top:2.4px" width="34" height="5" viewBox="0 0 34 5"><g fill="none" stroke="#f8e0d6" stroke-width="0.6"><rect x="0.5" y="0.6" width="3.4" height="3.6"/><path d="M1.3 0.6 V1.8 H3.1 V0.6"/><path d="M8 3.8 Q8 1.2 10.5 1.5 M9 0.5 L8 1.6 L9.4 2.3"/><path d="M11.8 2.2 L12.6 2.6 L11.8 3"/><rect x="15.5" y="1" width="3" height="3"/><path d="M15 0.5 H19"/><rect x="21.5" y="0.4" width="3.2" height="4.2"/><path d="M22.2 1.4 H24 M22.2 2.4 H24 M22.2 3.4 H24"/><path d="M30.5 2 L31.5 3 L32.5 2"/></g></svg>
<div class="a" style="left:206px;top:2px;font-size:2.95px;color:#f8e0d8;line-height:5px;white-space:nowrap">Заключение + тез COP29 в Баку (1)&nbsp;&nbsp;-&nbsp;&nbsp;PowerPoint</div>
<div class="a" style="left:418px;top:2.2px;width:11.8px;height:4.6px;background:#f4f4f4"></div>
<div class="a" style="left:419px;top:2.5px;font-size:3px;color:#777;line-height:4px">Вход</div>
<svg class="a" style="left:436px;top:2px" width="44" height="6" viewBox="0 0 44 6"><g fill="none" stroke="#f6d8cf" stroke-width="0.6"><rect x="0.5" y="1" width="4" height="3.5"/><path d="M0.5 2.3 H4.5"/><path d="M12 3 H15.5"/><rect x="23.2" y="1.3" width="3.2" height="3.2"/><path d="M24.3 0.6 H27.2 V3.4"/><path d="M34.5 1 L37.5 4.5 M37.5 1 L34.5 4.5"/></g></svg>
<svg class="a" style="left:450px;top:10.5px" width="5" height="5" viewBox="0 0 5 5"><circle cx="2.5" cy="1.6" r="1.1" fill="none" stroke="#f6d8cf" stroke-width="0.5"/><path d="M0.6 4.6 Q0.6 3 2.5 3 Q4.4 3 4.4 4.6" fill="none" stroke="#f6d8cf" stroke-width="0.5"/></svg>
<div class="a" style="left:456px;top:10.8px;font-size:3.1px;color:#f8e0d8;line-height:4px">Поделиться</div>
<div class="a" style="left:15px;top:8.8px;width:17px;height:7.4px;background:#f3f3f3"></div>
<div class="a" style="left:3.8px;top:11px;width:9.2px;font-size:3.1px;color:#f8ddd4;line-height:4px;white-space:nowrap">Файл</div>
<div class="a" style="left:17.0px;top:11px;width:15.0px;font-size:3.1px;color:#c5492c;line-height:4px;white-space:nowrap">Главная</div>
<div class="a" style="left:35.4px;top:11px;width:12.6px;font-size:3.1px;color:#f8ddd4;line-height:4px;white-space:nowrap">Вставка</div>
<div class="a" style="left:53.0px;top:11px;width:18.8px;font-size:3.1px;color:#f8ddd4;line-height:4px;white-space:nowrap">Конструктор</div>
<div class="a" style="left:77.0px;top:11px;width:15.4px;font-size:3.1px;color:#f8ddd4;line-height:4px;white-space:nowrap">Переходы</div>
<div class="a" style="left:97.7px;top:11px;width:17.0px;font-size:3.1px;color:#f8ddd4;line-height:4px;white-space:nowrap">Анимация</div>
<div class="a" style="left:118.0px;top:11px;width:18.0px;font-size:3.1px;color:#f8ddd4;line-height:4px;white-space:nowrap">Слайд-шоу</div>
<div class="a" style="left:140.2px;top:11px;width:19.0px;font-size:3.1px;color:#f8ddd4;line-height:4px;white-space:nowrap">Рецензирование</div>
<div class="a" style="left:169.7px;top:11px;width:7.4px;font-size:3.1px;color:#f8ddd4;line-height:4px;white-space:nowrap">Вид</div>
<div class="a" style="left:181.7px;top:11px;width:13.4px;font-size:3.1px;color:#f8ddd4;line-height:4px;white-space:nowrap">Справка</div>
<svg class="a" style="left:201px;top:10.8px" width="4" height="5" viewBox="0 0 4 5"><circle cx="2" cy="1.8" r="1.3" fill="none" stroke="#f6d8cf" stroke-width="0.5"/><path d="M1.3 3.6 H2.7 M1.5 4.4 H2.5" stroke="#f6d8cf" stroke-width="0.5"/></svg>
<div class="a" style="left:207px;top:11px;font-size:3.1px;color:#f8e0d8;line-height:4px;white-space:nowrap">Что вы хотите сделать?</div>
<div id="rib" class="a"></div>
<div class="a" style="left:5px;top:18px;width:7px;height:8px;background:#e8d8a8;border:0.5px solid #b8a070;border-radius:1px"></div>
<div class="a" style="left:7px;top:17px;width:3px;height:2px;background:#8a7a5a"></div>
<div class="a" style="left:2.4px;top:26.0px;font-size:3.1px;color:#6a6a6a;line-height:4px;white-space:nowrap">Вставить</div>
<div class="a" style="left:2.4px;top:28.5px;font-size:2.5px;color:#6a6a6a;line-height:4px;white-space:nowrap">v</div>
<div class="a" style="left:15px;top:18.1px;width:3px;height:3px;border:0.5px solid #b4b4b4"></div>
<div class="a" style="left:19.5px;top:17.6px;font-size:3.1px;color:#6a6a6a;line-height:4px;white-space:nowrap">Вырезать</div>
<div class="a" style="left:15px;top:24.1px;width:3px;height:3px;border:0.5px solid #b4b4b4"></div>
<div class="a" style="left:19.5px;top:23.6px;font-size:3.1px;color:#6a6a6a;line-height:4px;white-space:nowrap">Копировать&nbsp;&nbsp;v</div>
<div class="a" style="left:15px;top:30.1px;width:3px;height:3px;border:0.5px solid #b4b4b4"></div>
<div class="a" style="left:19.5px;top:29.6px;font-size:3.1px;color:#6a6a6a;line-height:4px;white-space:nowrap">Формат по образцу</div>
<div class="a" style="left:14.0px;top:35.4px;font-size:3.1px;color:#6a6a6a;line-height:4px;white-space:nowrap">Буфер обмена</div>
<div class="a" style="left:48.0px;top:35.4px;font-size:2.5px;color:#6a6a6a;line-height:4px;white-space:nowrap">.</div>
<div class="a" style="left:50px;top:17px;width:0.6px;height:21px;background:#d6d6d6"></div>
<div class="a" style="left:54px;top:19px;width:9px;height:7px;background:#fafafa;border:0.5px solid #c8c8c8"></div>
<div class="a" style="left:53.0px;top:30.0px;font-size:3.1px;color:#6a6a6a;line-height:4px;white-space:nowrap">Создать</div>
<div class="a" style="left:54.0px;top:33.5px;font-size:3.1px;color:#6a6a6a;line-height:4px;white-space:nowrap">слайд v</div>
<div class="a" style="left:66px;top:18.1px;width:3px;height:3px;border:0.5px solid #b4b4b4"></div>
<div class="a" style="left:70.0px;top:17.6px;font-size:3.1px;color:#6a6a6a;line-height:4px;white-space:nowrap">Макет v</div>
<div class="a" style="left:66px;top:24.1px;width:3px;height:3px;border:0.5px solid #b4b4b4"></div>
<div class="a" style="left:70.0px;top:23.6px;font-size:3.1px;color:#6a6a6a;line-height:4px;white-space:nowrap">Восстановить</div>
<div class="a" style="left:66px;top:30.1px;width:3px;height:3px;border:0.5px solid #b4b4b4"></div>
<div class="a" style="left:70.0px;top:29.6px;font-size:3.1px;color:#6a6a6a;line-height:4px;white-space:nowrap">Раздел v</div>
<div class="a" style="left:66.0px;top:35.4px;font-size:3.1px;color:#6a6a6a;line-height:4px;white-space:nowrap">Слайды</div>
<div class="a" style="left:92px;top:17px;width:0.6px;height:21px;background:#d6d6d6"></div>
<div class="a" style="left:95px;top:19.4px;width:32px;height:4.5px;background:#fff;border:0.5px solid #d0d0d0"></div>
<div class="a" style="left:128px;top:19.4px;width:10px;height:4.5px;background:#fff;border:0.5px solid #d0d0d0"></div>
<div class="a" style="left:140.0px;top:19.5px;font-size:3.2px;color:#9a9a9a;line-height:4px;white-space:nowrap">A&nbsp;&nbsp;A&nbsp;&nbsp;&nbsp;A&nbsp;&nbsp;&nbsp;&nbsp;:&nbsp;&nbsp;&nbsp;&nbsp;≡&nbsp;&nbsp;&nbsp;≡</div>
<div class="a" style="left:96.0px;top:27.0px;font-size:3.2px;color:#8a8a8a;line-height:4px;white-space:nowrap">Ж&nbsp;&nbsp;&nbsp;К&nbsp;&nbsp;&nbsp;Ч&nbsp;&nbsp;&nbsp;S&nbsp;&nbsp;&nbsp;abc&nbsp;&nbsp;AV&nbsp;&nbsp;&nbsp;Aa&nbsp;&nbsp;&nbsp;&nbsp;&nbsp;Av&nbsp;&nbsp;A</div>
<div class="a" style="left:120.0px;top:35.4px;font-size:3.1px;color:#6a6a6a;line-height:4px;white-space:nowrap">Шрифт</div>
<div class="a" style="left:159px;top:17px;width:0.6px;height:21px;background:#dedede"></div>


<div class="a" style="left:204px;top:18.1px;width:3px;height:3px;border:0.5px solid #d0d0d0"></div>
<div class="a" style="left:208.0px;top:17.6px;font-size:3.0px;color:#a8a8a8;line-height:4px;white-space:nowrap">Направление текста v</div>
<div class="a" style="left:204px;top:24.1px;width:3px;height:3px;border:0.5px solid #d0d0d0"></div>
<div class="a" style="left:208.0px;top:23.6px;font-size:3.0px;color:#a8a8a8;line-height:4px;white-space:nowrap">Выровнять текст v</div>
<div class="a" style="left:204px;top:30.1px;width:3px;height:3px;border:0.5px solid #d0d0d0"></div>
<div class="a" style="left:208.0px;top:29.6px;font-size:3.0px;color:#a8a8a8;line-height:4px;white-space:nowrap">Преобразовать в SmartArt v</div>
<div class="a" style="left:198.0px;top:35.4px;font-size:3.1px;color:#6a6a6a;line-height:4px;white-space:nowrap">Абзац</div>
<div class="a" style="left:248px;top:17px;width:0.6px;height:21px;background:#d6d6d6"></div>



<svg class="a" style="left:161px;top:18px" width="42" height="14" viewBox="0 0 42 14"><g stroke="#a8a8a8" stroke-width="0.6" fill="none">
<path d="M1 1.5 H1.6 M2.6 1.5 H6 M1 3 H1.6 M2.6 3 H6 M1 4.5 H1.6 M2.6 4.5 H6"/>
<path d="M8 1.5 H8.6 M9.6 1.5 H13 M8 3 H8.6 M9.6 3 H13 M8 4.5 H8.6 M9.6 4.5 H13"/>
<path d="M20 1.5 H25 M21.5 3 H25 M20 4.5 H25 M27 1.5 H32 M27 3 H30.5 M27 4.5 H32"/>
<path d="M35 1.2 H40 M36 2.6 H40 M35 4 H40 M35 5.4 H40"/>
<path d="M1 9 H6 M1 10.5 H4.5 M1 12 H6 M8 9 H13 M9 10.5 H12 M8 12 H13 M15 9 H20 M16.5 10.5 H20 M15 12 H20 M22 9 H27 M22 10.5 H27 M22 12 H27"/>
<path d="M30 9 H32.5 M30 10.5 H32.5 M30 12 H32.5 M33.5 9 H36 M33.5 10.5 H36 M33.5 12 H36"/>
</g></svg>
<svg class="a" style="left:252px;top:17.5px" width="36" height="17" viewBox="0 0 36 17"><g stroke="#9a9a9a" stroke-width="0.55" fill="none">
<rect x="0.5" y="1" width="3" height="2.6"/><path d="M6 1 L9 3.6"/><path d="M11 1 H14 V3.6"/><rect x="16" y="1" width="3" height="2.6"/><circle cx="22.5" cy="2.3" r="1.3"/><rect x="25.5" y="1" width="3" height="2.6"/><rect x="30.5" y="1" width="3" height="2.6"/>
<path d="M0.5 9.5 L2 6.5 L3.5 9.5 Z"/><path d="M6 6.5 V9.5 H9"/><path d="M11 6.5 Q11 9.5 14 9.5"/><path d="M17.5 6.5 L19 8 L17.5 9.5 L16 8 Z"/><path d="M21 6.5 L24 8 L21 9.5 Z"/><circle cx="27" cy="8" r="1.4"/><path d="M31 6.5 L33 8 L31 9.5"/>
<path d="M0.5 12.5 L3.5 15.5"/><path d="M6 15.5 Q7.5 12 9 15.5"/><path d="M11 12.5 L14 15.5 M11 15.5 H13"/><path d="M16.5 12.5 V15.5"/><path d="M21 12.5 Q20 14 21 15.5"/><path d="M26 12.5 Q27 14 26 15.5"/><path d="M31.5 12.5 L32.2 14 L33.6 14 L32.5 15 L33 16.3 L31.5 15.5 L30 16.3 L30.5 15 L29.4 14 L30.8 14 Z"/>
</g><g fill="#888"><path d="M35 2 L34.2 3 H35.8 Z"/><path d="M35 8.6 L34.2 7.6 H35.8 Z"/><path d="M34.2 13.5 H35.8 L35 14.5 Z"/></g></svg>
<div class="a" style="left:291px;top:18px;width:6px;height:7px;background:#f0d890;border-radius:1px"></div>
<div class="a" style="left:287.0px;top:27.0px;font-size:3.1px;color:#6a6a6a;line-height:4px;white-space:nowrap">Упорядочить</div>
<div class="a" style="left:292.0px;top:30.5px;font-size:2.5px;color:#6a6a6a;line-height:4px;white-space:nowrap">v</div>
<div class="a" style="left:310px;top:18px;width:6px;height:7px;border:0.5px solid #ccc;border-radius:50%"></div>
<div class="a" style="left:307.0px;top:26.5px;font-size:3.0px;color:#aaa;line-height:4px;white-space:nowrap">Экспресс-</div>
<div class="a" style="left:307.0px;top:30.0px;font-size:3.0px;color:#aaa;line-height:4px;white-space:nowrap">стили v</div>
<div class="a" style="left:322px;top:18.1px;width:3px;height:3px;border:0.5px solid #d0d0d0"></div>
<div class="a" style="left:326.0px;top:17.6px;font-size:3.0px;color:#b0b0b0;line-height:4px;white-space:nowrap">Заливка фигуры v</div>
<div class="a" style="left:322px;top:24.1px;width:3px;height:3px;border:0.5px solid #d0d0d0"></div>
<div class="a" style="left:326.0px;top:23.6px;font-size:3.0px;color:#b0b0b0;line-height:4px;white-space:nowrap">Контур фигуры v</div>
<div class="a" style="left:322px;top:30.1px;width:3px;height:3px;border:0.5px solid #d0d0d0"></div>
<div class="a" style="left:326.0px;top:29.6px;font-size:3.0px;color:#b0b0b0;line-height:4px;white-space:nowrap">Эффекты фигуры v</div>
<div class="a" style="left:286.0px;top:35.4px;font-size:3.1px;color:#6a6a6a;line-height:4px;white-space:nowrap">Рисование</div>
<div class="a" style="left:355px;top:17px;width:0.6px;height:21px;background:#d6d6d6"></div>
<div class="a" style="left:359px;top:18.5px;width:3px;height:3px;border:0.5px solid #b4b4b4"></div>
<div class="a" style="left:363.5px;top:18.0px;font-size:3.1px;color:#6a6a6a;line-height:4px;white-space:nowrap">Найти</div>
<div class="a" style="left:359px;top:24.1px;width:3px;height:3px;border:0.5px solid #b4b4b4"></div>
<div class="a" style="left:363.5px;top:23.6px;font-size:3.1px;color:#6a6a6a;line-height:4px;white-space:nowrap">Заменить&nbsp;&nbsp;v</div>
<div class="a" style="left:359px;top:29.8px;width:3px;height:3px;border:0.5px solid #b4b4b4"></div>
<div class="a" style="left:363.5px;top:29.3px;font-size:3.1px;color:#6a6a6a;line-height:4px;white-space:nowrap">Выделить v</div>
<div class="a" style="left:358.5px;top:35.4px;font-size:3.1px;color:#6a6a6a;line-height:4px;white-space:nowrap">Редактирование</div>
<div class="a" style="left:383.5px;top:17px;width:0.6px;height:21px;background:#d6d6d6"></div>
<div class="a" style="left:472.0px;top:35.5px;font-size:3px;color:#777;line-height:4px;white-space:nowrap">^</div>
<div id="thumbs" class="a"></div>
<div class="a" style="left:71px;top:44.4px;width:2.4px;height:54px;background:#ffffff;border:0.5px solid #d8d8d8;border-radius:1px"></div>
<div class="a" style="left:73.5px;top:39px;width:0.6px;height:210px;background:#d4d4d4"></div>
<div class="a" style="left:2.3px;top:44.7px;font-size:3.2px;color:#666;line-height:4px">1</div>
<div class="a" style="left:2.3px;top:82.0px;font-size:3.2px;color:#666;line-height:4px">2</div>
<div class="a" style="left:2.3px;top:118.5px;font-size:3.2px;color:#666;line-height:4px">3</div>
<div class="a" style="left:2.3px;top:156.0px;font-size:3.2px;color:#666;line-height:4px">4</div>
<div class="a" style="left:2.3px;top:193.3px;font-size:3.2px;color:#666;line-height:4px">5</div>
<div class="a" style="left:2.3px;top:231.0px;font-size:3.2px;color:#666;line-height:4px">6</div>
<div class="a" style="left:8.5px;top:44.4px;width:56.3px;height:31.3px;filter:blur(0.35px);background:linear-gradient(180deg,#e6ebef 0%,#dfe4e8 60%,#cfd4d8 100%);overflow:hidden">
 <svg class="a" style="left:10px;top:6px" width="14" height="14" viewBox="0 0 14 14"><g fill="none" stroke="#7a8a9a" stroke-width="0.7"><circle cx="7" cy="7" r="5.8"/><circle cx="7" cy="7" r="3.4"/><circle cx="7" cy="3.5" r="1.8"/><circle cx="7" cy="10.5" r="1.8"/><circle cx="3.5" cy="7" r="1.8"/><circle cx="10.5" cy="7" r="1.8"/></g></svg>
 <div class="a" style="left:27.5px;top:7.5px;font-size:5.2px;font-weight:700;color:#3a4a6a;line-height:6px;letter-spacing:-0.1px">COP<span style="color:#6a7a9a">29</span></div>
 <div class="a" style="left:28px;top:14px;font-size:2.6px;color:#7a8a9a;line-height:3px">Baku<br>Azerbaijan</div>
 <div class="a" style="left:41px;top:19px;width:15px;height:3px;background:#b8bcc0"></div>
 <div class="a" style="left:0;top:25px;width:56.3px;height:6.3px;background:linear-gradient(90deg,#d0d4d8,#c8ccd0,#d4d8db)"></div>
 <div class="a" style="left:2px;top:2px;width:52px;height:1px;background:repeating-linear-gradient(90deg,#c8ccd0 0 3px,transparent 3px 9px)"></div>
</div>
<div class="a" style="left:8.5px;top:81.7px;width:56.3px;height:31.1px;filter:blur(0.4px);background:#2a3440;overflow:hidden">
 <div class="a" style="left:0;top:0;width:14.5px;height:31.1px;background:linear-gradient(160deg,#5a6a80 0%,#1e2430 45%,#2a3440 100%)"></div>
 <div class="a" style="left:-4px;top:12px;font-size:9px;font-weight:700;color:#f0f4f8;line-height:9px;transform:rotate(-80deg);letter-spacing:-0.8px">COP</div>
 <div class="a" style="left:0;top:3px;width:3px;height:10px;background:#3a7ad0"></div>
 <div class="a" style="left:14.5px;top:0;width:18.5px;height:31.1px;background:#f4f4f4"></div>
 <div class="a" style="left:15px;top:0;width:17.5px;height:25px;background:#84e05a"></div>
 <div class="a" style="left:16.5px;top:1px;width:14px;height:23px;background:repeating-linear-gradient(180deg,#1a4a2a 0 0.8px,transparent 0.8px 1.9px);opacity:.7;-webkit-mask:linear-gradient(90deg,transparent 0 15%,#000 15% 85%,transparent 85%)"></div>
 <div class="a" style="left:33px;top:0;width:23.3px;height:7px;background:#c8ccd0"></div>
 <div class="a" style="left:33px;top:4.5px;width:23.3px;height:3px;background:repeating-linear-gradient(90deg,#2a3038 0 1.3px,transparent 1.3px 2.6px);opacity:.8"></div>
 <div class="a" style="left:33px;top:7px;width:23.3px;height:9px;background:#6a9a98"></div>
 <div class="a" style="left:33px;top:15px;width:23.3px;height:10px;background:#3a4048"></div>
 <div class="a" style="left:33px;top:15px;width:23.3px;height:10px;background:repeating-linear-gradient(90deg,#1a2028 0 1.2px,#6a7078 1.2px 2px);opacity:.6"></div>
 <div class="a" style="left:33px;top:25px;width:23.3px;height:6.1px;background:#b8bec4"></div>
</div>
<div class="a" style="left:7.5px;top:117.2px;width:58.3px;height:33.8px;border:1.2px solid #e0825e;background:#e8b9a4"></div>
<div class="a" style="left:8.7px;top:118.4px;width:55.9px;height:31.4px;filter:blur(0.35px);background:#70ad47;overflow:hidden">
 <div class="a" style="left:0.5px;top:0.5px;width:18px;height:30.4px;background:linear-gradient(180deg,#3a3090 0%,#8060b8 35%,#c8a0c8 50%,#6a58b0 70%,#3a3a90 100%)"></div>
 <div class="a" style="left:1px;top:8px;width:5px;height:16px;background:#3050a8;border-radius:50% 50% 0 0"></div>
 <div class="a" style="left:0.5px;top:22px;width:8px;height:9px;background:#4a3a5a"></div>
 <div class="a" style="left:30px;top:1px;width:12px;height:1.2px;background:#a04020;opacity:.6"></div>
 <div class="a" style="left:20px;top:4px;width:34px;height:21px;background:repeating-linear-gradient(180deg,#1e4a3a 0 0.6px,transparent 0.6px 1.3px);opacity:.4"></div>
</div>
<div class="a" style="left:8.5px;top:155.7px;width:56.3px;height:32.3px;filter:blur(0.35px);background:#70b847;overflow:hidden">
 <div class="a" style="left:16px;top:1.5px;width:24px;height:1.5px;background:#2a4a2a;opacity:.6"></div>
 <div class="a" style="left:7.5px;top:4.5px;width:40px;height:14px;background:linear-gradient(180deg,#2a4050 0%,#4a6070 45%,#c0c8c8 60%,#808888 100%)"></div>
 <div class="a" style="left:7.5px;top:6px;width:15px;height:8px;background:#2a7aa0;opacity:.7"></div>
 <div class="a" style="left:7.5px;top:12px;width:40px;height:3px;background:repeating-linear-gradient(90deg,#e8e8e8 0 3px,#707070 3px 5px)"></div>
 <div class="a" style="left:5px;top:20.5px;width:46px;height:8px;background:repeating-linear-gradient(90deg,#2a5a2a 0 8px,transparent 8px 12px);-webkit-mask:repeating-linear-gradient(180deg,#000 0 0.8px,transparent 0.8px 2px);opacity:.55"></div>
 <div class="a" style="left:3px;top:28px;width:9px;height:3px;background:#2a5a30;opacity:.5"></div>
</div>
<div class="a" style="left:8.5px;top:193.0px;width:56.3px;height:31.8px;filter:blur(0.35px);background:#70b847;overflow:hidden">
 <div class="a" style="left:15px;top:2.5px;width:18px;height:1.6px;background:#2a4a2a;opacity:.7"></div>
 <div class="a" style="left:38.5px;top:0.5px;width:17px;height:8.5px;background:#1a8a9a"></div>
 <div class="a" style="left:40px;top:2px;width:5px;height:5px;border-radius:50%;border:0.6px solid #bfe"></div>
 <div class="a" style="left:46px;top:3px;width:8px;height:2px;background:#cfeff0;opacity:.8"></div>
 <div class="a" style="left:4px;top:9px;width:40px;height:14px;background:repeating-linear-gradient(180deg,#2a5a30 0 0.8px,transparent 0.8px 2.2px);opacity:.5"></div>
 <div class="a" style="left:36px;top:20px;width:20.3px;height:11.8px;background:linear-gradient(135deg,#7ab0c0,#3a8aa0 50%,#a0c8d0)"></div>
 <div class="a" style="left:40px;top:23px;width:6px;height:6px;border-radius:50%;background:#5aa0b0"></div>
</div>
<div class="a" style="left:8.5px;top:230.7px;width:56.3px;height:17.9px;filter:blur(0.35px);background:#70b847;overflow:hidden">
 <div class="a" style="left:15px;top:1.5px;width:22px;height:1.8px;background:#2a4a2a;opacity:.7"></div>
 <div class="a" style="left:41px;top:0.5px;width:14.5px;height:7px;background:#1a8a9a"></div>
 <div class="a" style="left:3px;top:5px;width:36px;height:1px;background:#2a5a30;opacity:.5"></div>
 <div class="a" style="left:6.5px;top:8.8px;width:8px;height:3.6px;background:#4a2a2a"></div>
 <div class="a" style="left:16.5px;top:8.8px;width:8px;height:3.6px;background:#4a2a2a"></div>
 <div class="a" style="left:26.5px;top:8.8px;width:8px;height:3.6px;background:#4a2a2a"></div>
 <div class="a" style="left:36.5px;top:8.8px;width:8px;height:3.6px;background:#4a2a2a"></div>
 <div class="a" style="left:6px;top:14px;width:40px;height:3px;background:repeating-linear-gradient(90deg,#2a5a30 0 6px,transparent 6px 10px);opacity:.4"></div>
</div>
<div id="slide" class="a">
<svg class="a" style="left:1px;top:1px" width="108" height="185" viewBox="0 0 108 185" preserveAspectRatio="none"><use href="#city"/></svg>
<div class="a" style="left:150px;top:2.5px;width:100px;font-family:'Liberation Serif',serif;font-size:9.2px;font-weight:700;color:#b8321c;line-height:10px;-webkit-text-stroke:0.25px #b8321c;white-space:nowrap;letter-spacing:-0.1px">COP 29 в Баку</div>
<div class="a" style="left:119px;top:14.80px;width:208px;font-family:'Liberation Serif',serif;font-size:8px;font-weight:700;color:#1a3048;line-height:9px;-webkit-text-stroke:0.3px #1a3048;text-align:justify;text-align-last:justify;">29-я Конференция сторон Рамочной конвенции ООН по</div>
<div class="a" style="left:109.8px;top:16.80px;width:4.2px;height:4.2px;border:0.9px solid #1d3040;box-shadow:0.9px 0.9px 0 #1d3040"></div>
<div class="a" style="left:119px;top:22.85px;width:208px;font-family:'Liberation Serif',serif;font-size:8px;font-weight:700;color:#1a3048;line-height:9px;-webkit-text-stroke:0.3px #1a3048;text-align:justify;text-align-last:justify;">климату (COP29), проведенная в ноябре в Баку, -</div>
<div class="a" style="left:119px;top:30.90px;width:208px;font-family:'Liberation Serif',serif;font-size:8px;font-weight:700;color:#1a3048;line-height:9px;-webkit-text-stroke:0.3px #1a3048;text-align:justify;text-align-last:justify;">международное событие, привлекающее внимание к</div>
<div class="a" style="left:119px;top:38.95px;width:208px;font-family:'Liberation Serif',serif;font-size:8px;font-weight:700;color:#1a3048;line-height:9px;-webkit-text-stroke:0.3px #1a3048;text-align:justify;text-align-last:justify;">глобальным усилиям по борьбе с изменением климата и</div>
<div class="a" style="left:119px;top:47.00px;width:208px;font-family:'Liberation Serif',serif;font-size:8px;font-weight:700;color:#1a3048;line-height:9px;-webkit-text-stroke:0.3px #1a3048;white-space:nowrap;">устойчивому развитию.</div>
<div class="a" style="left:119px;top:55.05px;width:208px;font-family:'Liberation Serif',serif;font-size:8px;font-weight:700;color:#1a3048;line-height:9px;-webkit-text-stroke:0.3px #1a3048;text-align:justify;text-align-last:justify;">COP29 - это платформа для международного</div>
<div class="a" style="left:109.8px;top:57.05px;width:4.2px;height:4.2px;border:0.9px solid #1d3040;box-shadow:0.9px 0.9px 0 #1d3040"></div>
<div class="a" style="left:119px;top:63.10px;width:208px;font-family:'Liberation Serif',serif;font-size:8px;font-weight:700;color:#1a3048;line-height:9px;-webkit-text-stroke:0.3px #1a3048;text-align:justify;text-align-last:justify;">согласования позиций и сотрудничества, принятия</div>
<div class="a" style="left:119px;top:71.15px;width:208px;font-family:'Liberation Serif',serif;font-size:8px;font-weight:700;color:#1a3048;line-height:9px;-webkit-text-stroke:0.3px #1a3048;text-align:justify;text-align-last:justify;">стратегий, направленных на сокращение выбросов</div>
<div class="a" style="left:119px;top:79.20px;width:208px;font-family:'Liberation Serif',serif;font-size:8px;font-weight:700;color:#1a3048;line-height:9px;-webkit-text-stroke:0.3px #1a3048;text-align:justify;text-align-last:justify;">парниковых газов и усиление мер по адаптации к</div>
<div class="a" style="left:119px;top:87.25px;width:208px;font-family:'Liberation Serif',serif;font-size:8px;font-weight:700;color:#1a3048;line-height:9px;-webkit-text-stroke:0.3px #1a3048;white-space:nowrap;">изменяющемуся климату.</div>
<div class="a" style="left:119px;top:95.30px;width:208px;font-family:'Liberation Serif',serif;font-size:8px;font-weight:700;color:#1a3048;line-height:9px;-webkit-text-stroke:0.3px #1a3048;text-align:justify;text-align-last:justify;">Азербайджан, принимая на себя роль ведущего</div>
<div class="a" style="left:109.8px;top:97.30px;width:4.2px;height:4.2px;border:0.9px solid #1d3040;box-shadow:0.9px 0.9px 0 #1d3040"></div>
<div class="a" style="left:119px;top:103.35px;width:208px;font-family:'Liberation Serif',serif;font-size:8px;font-weight:700;color:#1a3048;line-height:9px;-webkit-text-stroke:0.3px #1a3048;text-align:justify;text-align-last:justify;">организатора, подтвердил свою готовность активно</div>
<div class="a" style="left:119px;top:111.40px;width:208px;font-family:'Liberation Serif',serif;font-size:8px;font-weight:700;color:#1a3048;line-height:9px;-webkit-text-stroke:0.3px #1a3048;text-align:justify;text-align-last:justify;">участвовать в решении глобальных экологических</div>
<div class="a" style="left:119px;top:119.45px;width:208px;font-family:'Liberation Serif',serif;font-size:8px;font-weight:700;color:#1a3048;line-height:9px;-webkit-text-stroke:0.3px #1a3048;white-space:nowrap;">вызовов.</div>
<div class="a" style="left:119px;top:127.50px;width:208px;font-family:'Liberation Serif',serif;font-size:8px;font-weight:700;color:#1a3048;line-height:9px;-webkit-text-stroke:0.3px #1a3048;text-align:justify;text-align-last:justify;">Решения, принятые по итогам 29-й сессии Конференции</div>
<div class="a" style="left:109.8px;top:129.50px;width:4.2px;height:4.2px;border:0.9px solid #1d3040;box-shadow:0.9px 0.9px 0 #1d3040"></div>
<div class="a" style="left:119px;top:135.55px;width:208px;font-family:'Liberation Serif',serif;font-size:8px;font-weight:700;color:#1a3048;line-height:9px;-webkit-text-stroke:0.3px #1a3048;text-align:justify;text-align-last:justify;">сторон Рамочной конвенции ООН об изменении</div>
<div class="a" style="left:119px;top:143.60px;width:208px;font-family:'Liberation Serif',serif;font-size:8px;font-weight:700;color:#1a3048;line-height:9px;-webkit-text-stroke:0.3px #1a3048;text-align:justify;text-align-last:justify;">климата (COP29), имеют исключительное значение для</div>
<div class="a" style="left:119px;top:151.65px;width:208px;font-family:'Liberation Serif',serif;font-size:8px;font-weight:700;color:#1a3048;line-height:9px;-webkit-text-stroke:0.3px #1a3048;white-space:nowrap;">будущего человечества.</div>
</div>
<div id="notes" class="a"></div>
  <div class="a" style="left:78.6px;top:235.2px;font-size:3.65px;color:#666;line-height:5px;white-space:nowrap">Заметки, чтобы добавить заметки</div>
  <div id="status" class="a"></div>
  <div class="a" style="left:2px;top:249px;font-size:2.9px;color:#666;line-height:4px;white-space:nowrap">Слайд 3 из 18</div><div class="a" style="left:31px;top:249px;font-size:2.9px;color:#666;line-height:4px;white-space:nowrap">русский</div>
  <div class="a" style="left:25px;top:249.3px;width:3px;height:2.8px;border:0.5px solid #aaa"></div>
  <div class="a" style="left:342px;top:249px;font-size:3.1px;color:#666;line-height:4px;white-space:nowrap">= Заметки</div>
  <div class="a" style="left:362px;top:249px;font-size:3.1px;color:#666;line-height:4px;white-space:nowrap">▬ Примечания</div>
  <div class="a" style="left:390.5px;top:248.6px;width:8.5px;height:4.2px;background:#c8c8c8"></div>
  <div class="a" style="left:392.5px;top:249.4px;width:4.5px;height:2.6px;border:0.5px solid #777"></div>
  <div class="a" style="left:402px;top:249.4px;width:3px;height:2.6px;border:0.5px solid #888"></div>
  <div class="a" style="left:412px;top:249.4px;width:3px;height:2.6px;border:0.5px solid #888"></div>
  <div class="a" style="left:422px;top:249.4px;width:3.4px;height:2.6px;border:0.5px solid #888"></div>
  <div class="a" style="left:430px;top:250.6px;width:2px;height:0.5px;background:#888"></div>
  <div class="a" style="left:434px;top:250.6px;width:22px;height:0.5px;background:#999"></div>
  <div class="a" style="left:443px;top:249px;width:1.2px;height:3.4px;background:#555"></div>
  <div class="a" style="left:457.5px;top:249px;font-size:3.1px;color:#666;line-height:4px;white-space:nowrap">+&nbsp;&nbsp;67%</div>
  <div class="a" style="left:473px;top:248.8px;width:3.6px;height:3.6px;border:0.5px solid #888"></div>
  <div id="sbot" class="a"></div>
  <div class="a" style="left:0;top:254px;width:36px;height:6px;background:#fbfbfb"></div>
  <div class="a" style="left:473.5px;top:66px;width:2.5px;height:10px;background:#fff;border:0.4px solid #d8d8d8"></div>
  <div class="a" style="left:476px;top:217px;font-size:3px;color:#777;line-height:4px">^<br>v</div>
</div>
</div>

<div class="a" style="left:494px;top:98.3px;width:114px;height:64.5px;border-radius:5px;background:#5ad69f;overflow:hidden">
 <div class="a" style="left:2px;top:2px;width:110px;height:60.5px;border-radius:3px;overflow:hidden;background:linear-gradient(90deg,#c6c6ca 0%,#d4d4d7 40%,#d9d9db 100%)">
 <div class="a" style="left:0;top:0;width:110px;height:60.5px;filter:blur(0.9px)">
  <div class="a" style="left:15px;top:-1px;width:22px;height:6px;background:#2e2e30;clip-path:polygon(0 0,100% 0,90% 100%,8% 80%)"></div>
  <div class="a" style="left:0;top:38.5px;width:75px;height:10.5px;background:linear-gradient(180deg,#c46a3e,#b45a34)"></div>
  <div class="a" style="left:88px;top:45px;width:22px;height:15.5px;background:#a85434"></div>
  <div class="a" style="left:50px;top:44px;width:58px;height:22px;background:radial-gradient(ellipse at 40% 30%,#6a2a28,#4a1a1c 70%);border-radius:40% 45% 0 0"></div>
  <div class="a" style="left:67px;top:40px;width:14px;height:9px;background:#a87868;border-radius:0 0 40% 40%"></div>
  <div class="a" style="left:58px;top:13.5px;width:30px;height:25px;background:#2c2422;border-radius:50% 50% 40% 45%"></div>
  <div class="a" style="left:62.5px;top:19.5px;width:22px;height:27.5px;background:radial-gradient(ellipse at 50% 45%,#d4ae9e,#b88c7c 80%);border-radius:42% 42% 48% 48%"></div>
  <div class="a" style="left:60px;top:15px;width:26px;height:9px;background:#2c2422;border-radius:50% 50% 30% 60%"></div>
  <div class="a" style="left:66px;top:29.5px;width:5px;height:1.4px;background:#6a4a44;border-radius:1px"></div>
  <div class="a" style="left:76px;top:29.5px;width:5px;height:1.4px;background:#6a4a44;border-radius:1px"></div>
  <div class="a" style="left:70.5px;top:39.5px;width:6px;height:1.5px;background:#8a5a55;border-radius:1px"></div>
 </div>
</div>
<div class="a" style="left:2.7px;top:51.4px;width:70px;height:10.8px;background:rgba(40,40,40,.78);border-radius:2px"></div>
 <svg class="a" style="left:5px;top:52.5px" width="6" height="8" viewBox="0 0 6 8"><path d="M1.3 0.5 H4.7 V1.3 L4 1.6 V3.6 L5.4 4.8 V5.4 H0.6 V4.8 L2 3.6 V1.6 L1.3 1.3 Z M3 5.4 V7.8" fill="#f0f0f0" stroke="#f0f0f0" stroke-width="0.5"/></svg>
 <div class="a" style="left:14.3px;top:52.5px;font-size:7.4px;color:#f4f4f4;line-height:9px;white-space:nowrap">Sevinc Abbasova</div>
</div>
<div class="a" style="left:494px;top:163px;width:113.5px;height:62.5px;border-radius:0 0 4px 4px;overflow:hidden;background:#c8c6c4">
<div class="a" style="left:0;top:0;width:113.5px;height:62.5px;overflow:hidden;filter:blur(0.9px)">
 <div class="a" style="left:0;top:0;width:30px;height:62.5px;background:linear-gradient(90deg,#c4c4c4,#d2d2d2)"></div>
 <div class="a" style="left:9.5px;top:0;width:1.2px;height:62.5px;background:#9a9a9a"></div>
 <div class="a" style="left:24px;top:0;width:89.5px;height:24px;background:linear-gradient(180deg,#b8ada4,#c6bab0)"></div>
 <div class="a" style="left:60px;top:20px;width:53.5px;height:42.5px;background:#dadada"></div>
 <div class="a" style="left:94px;top:25px;width:13px;height:16px;background:#e6e6e6;border:1px solid #c4c4c4"></div>
 <div class="a" style="left:96.5px;top:27.5px;width:3px;height:6px;background:#404040"></div>
 <div class="a" style="left:100.5px;top:27.5px;width:3px;height:6px;background:#505050"></div>
 <div class="a" style="left:92px;top:54px;width:16px;height:8.5px;background:#8a98aa"></div>
 <div class="a" style="left:72px;top:55px;width:12px;height:7.5px;background:#2a2e3a"></div>
 <div class="a" style="left:17px;top:2px;width:9px;height:3px;background:#3a3a3a;transform:rotate(40deg)"></div>
 <div class="a" style="left:23px;top:2px;width:58px;height:64px;background:#2a2220;border-radius:46% 46% 25% 25%"></div>
 <div class="a" style="left:27.5px;top:16px;width:48px;height:52px;background:radial-gradient(ellipse at 50% 40%,#d6b6aa,#bc988c 75%);border-radius:46% 46% 35% 35%"></div>
 <div class="a" style="left:28px;top:3px;width:47px;height:17px;background:#2a2220;border-radius:50% 50% 35% 40%"></div>
 <div class="a" style="left:28.5px;top:36.5px;width:20px;height:14px;border:2.2px solid #2c2424;border-radius:40% 40% 50% 50%"></div>
 <div class="a" style="left:50px;top:35.5px;width:21px;height:15px;border:2.2px solid #2c2424;border-radius:40% 40% 50% 50%"></div>
 <div class="a" style="left:47px;top:40px;width:4px;height:2px;background:#2c2424"></div>
 <div class="a" style="left:33px;top:33.5px;width:10px;height:1.6px;background:#5a3a34"></div>
 <div class="a" style="left:55px;top:33px;width:11px;height:1.6px;background:#5a3a34"></div>
</div>
<div class="a" style="left:2.7px;top:49.9px;width:59.8px;height:10.9px;background:rgba(40,40,40,.72);border-radius:2px"></div>
 <div class="a" style="left:4.5px;top:51px;font-size:7.4px;color:#f4f4f4;line-height:9px;white-space:nowrap">Markaziy Studiya</div>
</div>
<div class="a" style="left:484px;top:217px;width:1px;height:14px;background:#9a9a9a"></div>
<div class="a" style="left:494.3px;top:314.8px;width:112.7px;height:63.3px;border-radius:5px;background:#262626;overflow:hidden">
 <div class="a" style="left:13.2px;top:0;width:84.8px;height:63.3px;overflow:hidden;background:#d8dce0">
 <div class="a" style="left:0;top:0;width:84.8px;height:63.3px;filter:blur(1px)">
  <div class="a" style="left:-2px;top:0;width:40px;height:66px;background:linear-gradient(180deg,#c0c8c0 0%,#7a8a70 25%,#5a6a50 55%,#6a7a62 100%)"></div>
  <div class="a" style="left:2px;top:4px;width:10px;height:8px;background:#e4e8e4;border-radius:50%"></div>
  <div class="a" style="left:20px;top:-2px;width:31px;height:22px;background:repeating-linear-gradient(90deg,#4a7eb0 0 3px,#90b4d4 3px 4.5px)"></div>
  <div class="a" style="left:22px;top:20px;width:27px;height:26px;background:#8a7470"></div>
  <div class="a" style="left:68px;top:10px;width:19px;height:55px;background:#3e5c44;border-radius:50% 50% 0 0"></div>
  <div class="a" style="left:10px;top:46px;width:76px;height:20px;background:#e6e6e4;border-radius:14px 14px 0 0"></div>
  <div class="a" style="left:31px;top:14px;width:36px;height:32px;background:#2a2424;border-radius:50% 50% 40% 40%"></div>
  <div class="a" style="left:36.5px;top:21px;width:26.5px;height:26px;background:radial-gradient(ellipse at 50% 40%,#d0b0a0,#b89484 80%);border-radius:40% 40% 48% 48%"></div>
  <div class="a" style="left:33px;top:14px;width:33px;height:11px;background:#2a2424;border-radius:50% 50% 30% 30%"></div>
  <div class="a" style="left:39.5px;top:30px;width:10px;height:6px;border:1px solid #8a8a88;border-radius:40%"></div>
  <div class="a" style="left:50.5px;top:30px;width:10px;height:6px;border:1px solid #8a8a88;border-radius:40%"></div>
  <div class="a" style="left:46px;top:40.5px;width:7px;height:1.5px;background:#9a6a60;border-radius:1px"></div>
 </div>
</div>
<div class="a" style="left:2.4px;top:50.1px;width:77.7px;height:10.9px;background:rgba(40,40,40,.72);border-radius:2px"></div>
 <div class="a" style="left:4.3px;top:51.1px;font-size:7.2px;color:#f4f4f4;line-height:9px;white-space:nowrap">Karlibaeva Raya TSUE</div>
 <svg class="a" style="left:104.5px;top:26.5px" width="6" height="11" viewBox="0 0 6 11"><path d="M1 1 L5 5.5 L1 10" fill="none" stroke="#f0f0f0" stroke-width="1.2"/></svg>
</div>
</body></html>
